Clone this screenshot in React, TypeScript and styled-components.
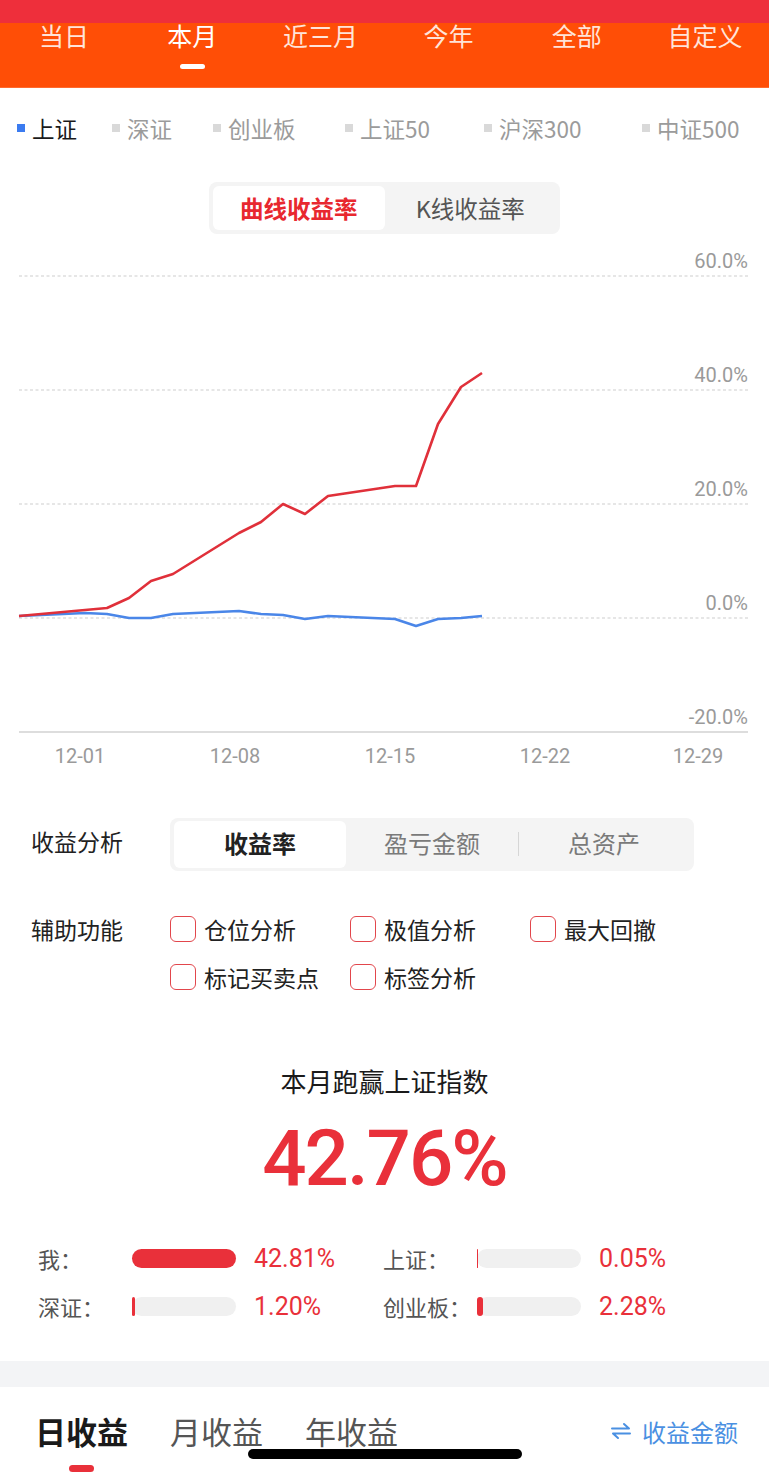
import React from 'react'
import styled, { createGlobalStyle } from 'styled-components'

const CN = `'Noto Sans CJK SC', 'Noto Sans', sans-serif`
const NUM = `Roboto, 'Noto Sans CJK SC', sans-serif`
const RED = '#E9303A'

const GlobalStyle = createGlobalStyle`
  html, body { margin: 0; padding: 0; background: #fff; }
  body { font-family: ${CN}; -webkit-font-smoothing: antialiased; }
  * { box-sizing: border-box; }
`

const periods = ['当日', '本月', '近三月', '今年', '全部', '自定义']
const indexes = [
  { name: '上证', color: '#3B7BF0', active: true },
  { name: '深证', color: '#D9D9D9' },
  { name: '创业板', color: '#D9D9D9' },
  { name: '上证50', color: '#D9D9D9' },
  { name: '沪深300', color: '#D9D9D9' },
  { name: '中证500', color: '#D9D9D9' },
]

// chart coordinates, already in svg space (page y - 240)
const myLine = [
  [19, 377], [107, 369], [129, 359], [151, 342], [173, 335], [239, 294], [261, 283],
  [283, 265], [305, 275], [328, 257], [395, 247], [416, 247], [438, 185], [461, 148], [482, 134],
]
const szLine = [
  [19, 377], [85, 374], [107, 375], [129, 379], [151, 379], [173, 375], [239, 372], [261, 375],
  [283, 376], [305, 380], [328, 377], [395, 380], [416, 387], [438, 380], [461, 379], [482, 377],
]
const gridY = [
  { y: 37, label: '60.0%' },
  { y: 151, label: '40.0%' },
  { y: 265, label: '20.0%' },
  { y: 379, label: '0.0%' },
]
const xTicks = [
  { x: 80, label: '12-01' },
  { x: 235, label: '12-08' },
  { x: 390, label: '12-15' },
  { x: 545, label: '12-22' },
  { x: 698, label: '12-29' },
]

const helpers = ['仓位分析', '极值分析', '最大回撤', '标记买卖点', '标签分析']

const compare = [
  { name: '我：', value: 42.81 },
  { name: '上证：', value: 0.05 },
  { name: '深证：', value: 1.2 },
  { name: '创业板：', value: 2.28 },
]
const maxValue = Math.max(...compare.map(c => c.value))
const BAR_W = 104

const toPoints = (pts: number[][]) => pts.map(p => p.join(',')).join(' ')

const App = () => {
  return (
    <Page>
      <GlobalStyle />
      <StatusBar />
      <Nav>
        {periods.map(p => (
          <NavTab key={p} $active={p === '本月'}>
            {p}
            <NavMark $active={p === '本月'} />
          </NavTab>
        ))}
      </Nav>

      <Legend>
        {indexes.map(i => (
          <LegendItem key={i.name} $active={!!i.active}>
            <LegendDot $color={i.color} />
            {i.name}
          </LegendItem>
        ))}
      </Legend>

      <SegWrap>
        <Seg>
          <SegItem $active>曲线收益率</SegItem>
          <SegItem>K线收益率</SegItem>
        </Seg>
      </SegWrap>

      <ChartSvg viewBox="0 0 769 545">
        {gridY.map(g => (
          <g key={g.label}>
            <line x1={19} x2={748} y1={g.y} y2={g.y} stroke="#DEDEDE" strokeWidth={1.5} strokeDasharray="3 2.5" />
            <AxisText x={748} y={g.y - 8} textAnchor="end">{g.label}</AxisText>
          </g>
        ))}
        <AxisText x={748} y={485} textAnchor="end">-20.0%</AxisText>
        <line x1={19} x2={748} y1={493} y2={493} stroke="#DDDDDD" strokeWidth={2} />
        {xTicks.map(t => (
          <AxisText key={t.label} x={t.x} y={524} textAnchor="middle" fill="#8C8C8C">{t.label}</AxisText>
        ))}
        <polyline points={toPoints(szLine)} fill="none" stroke="#4A86E8" strokeWidth={2.6} strokeLinejoin="round" />
        <polyline points={toPoints(myLine)} fill="none" stroke="#E0303A" strokeWidth={2.6} strokeLinejoin="round" />
      </ChartSvg>

      <AnalysisRow>
        <RowLabel $lift>收益分析</RowLabel>
        <Tabs>
          <TabItem $active>收益率</TabItem>
          <TabItem>盈亏金额</TabItem>
          <TabItem $divider>总资产</TabItem>
        </Tabs>
      </AnalysisRow>

      <HelperRow>
        <RowLabel>辅助功能</RowLabel>
        <CheckGrid>
          {helpers.map(h => (
            <CheckItem key={h}>
              <CheckBox />
              {h}
            </CheckItem>
          ))}
        </CheckGrid>
      </HelperRow>

      <SummaryTitle>本月跑赢上证指数</SummaryTitle>
      <BigNum>42.76%</BigNum>

      <CompareGrid>
        {compare.map(c => (
          <CompareItem key={c.name}>
            <CompareLabel>{c.name}</CompareLabel>
            <Track>
              <Fill style={{ width: `${Math.max(1, (c.value / maxValue) * BAR_W)}px` }} />
            </Track>
            <CompareValue>{c.value.toFixed(2)}%</CompareValue>
          </CompareItem>
        ))}
      </CompareGrid>

      <Band />

      <BottomTabs>
        <TabGroup>
          {['日收益', '月收益', '年收益'].map((t, i) => (
            <BottomTab key={t} $active={i === 0}>
              {t}
              <BottomMark $active={i === 0} />
            </BottomTab>
          ))}
        </TabGroup>
        <AmountSwitch>
          <svg width="22" height="18" viewBox="0 0 22 18">
            <path d="M2 6.5 H19 L14 2" fill="none" stroke="#4A90E2" strokeWidth="2" strokeLinecap="round" strokeLinejoin="round" />
            <path d="M20 11.5 H3 L8 16" fill="none" stroke="#4A90E2" strokeWidth="2" strokeLinecap="round" strokeLinejoin="round" />
          </svg>
          收益金额
        </AmountSwitch>
      </BottomTabs>

      <HomeBar />
    </Page>
  )
}

export default App

const Page = styled.div`
position: relative;
width: 769px;
height: 1475px;
overflow: hidden;
background: #fff;
`

const StatusBar = styled.div`
height: 23px;
background: #EE2F3B;
`

const Nav = styled.div`
display: grid;
grid-template-columns: repeat(6, 1fr);
height: 65px;
background: #FF4E06;
border-bottom: 1px solid #FF6A2E;
`

const NavTab = styled.div<{ $active?: boolean }>`
display: flex;
flex-direction: column;
align-items: center;
font-size: 25px;
line-height: 24px;
color: ${p => (p.$active ? '#ffffff' : '#FFE4D9')};
`

const NavMark = styled.div<{ $active?: boolean }>`
width: 25px;
height: 5px;
border-radius: 3px;
margin-top: 17px;
background: #fff;
visibility: ${p => (p.$active ? 'visible' : 'hidden')};
`

const Legend = styled.div`
display: grid;
grid-template-columns: 95px 101px 132px 139px 158px auto;
align-items: center;
height: 79px;
padding-left: 17px;
`

const LegendItem = styled.div<{ $active?: boolean }>`
display: flex;
align-items: center;
gap: 7px;
font-size: 22.5px;
line-height: 28px;
color: ${p => (p.$active ? '#1A1A1A' : '#9B9B9B')};
`

const LegendDot = styled.span<{ $color: string }>`
width: 8px;
height: 8px;
background: ${p => p.$color};
`

const SegWrap = styled.div`
display: flex;
justify-content: center;
margin-top: 15px;
`

const Seg = styled.div`
display: flex;
width: 351px;
height: 52px;
padding: 4px;
border-radius: 8px;
background: #F4F4F4;
`

const SegItem = styled.div<{ $active?: boolean }>`
flex: 1;
display: flex;
align-items: center;
justify-content: center;
border-radius: 6px;
font-size: 23.5px;
font-weight: ${p => (p.$active ? 700 : 400)};
color: ${p => (p.$active ? '#E8282F' : '#555555')};
background: ${p => (p.$active ? '#ffffff' : 'transparent')};
`

const ChartSvg = styled.svg`
display: block;
width: 769px;
height: 545px;
margin-top: 5px;
`

const AxisText = styled.text`
font-family: ${NUM};
font-size: 20px;
fill: #9A9A9A;
`

const AnalysisRow = styled.div`
display: flex;
align-items: center;
margin-top: 34px;
padding-left: 31px;
`

const RowLabel = styled.div<{ $lift?: boolean }>`
width: 139px;
flex-shrink: 0;
padding-bottom: ${p => (p.$lift ? '7px' : '0')};
font-size: 23px;
line-height: 26px;
color: #222;
`

const Tabs = styled.div`
display: grid;
grid-template-columns: repeat(3, 1fr);
width: 524px;
height: 53px;
padding: 3px 4px;
border-radius: 8px;
background: #F4F4F4;
`

const TabItem = styled.div<{ $active?: boolean; $divider?: boolean }>`
position: relative;
display: flex;
align-items: center;
justify-content: center;
padding-bottom: 5px;
border-radius: 6px;
font-size: 24px;
font-weight: ${p => (p.$active ? 700 : 400)};
color: ${p => (p.$active ? '#222' : '#7A7A7A')};
background: ${p => (p.$active ? '#fff' : 'transparent')};
&::before {
  content: '';
  display: ${p => (p.$divider ? 'block' : 'none')};
  position: absolute;
  left: 0;
  top: 11px;
  width: 1px;
  height: 24px;
  background: #D6D6D6;
}
`

const HelperRow = styled.div`
display: flex;
align-items: flex-start;
margin-top: 45px;
padding-left: 31px;
`

const CheckGrid = styled.div`
display: grid;
grid-template-columns: repeat(3, 180px);
row-gap: 22px;
`

const CheckItem = styled.div`
display: flex;
align-items: center;
gap: 8px;
font-size: 23px;
line-height: 26px;
color: #222;
`

const CheckBox = styled.span`
width: 26px;
height: 26px;
border: 1.5px solid #E2464C;
border-radius: 6px;
`

const SummaryTitle = styled.div`
margin-top: 73px;
text-align: center;
font-size: 26px;
line-height: 36px;
color: #1A1A1A;
`

const BigNum = styled.div`
margin-top: 21px;
text-align: center;
font-family: ${NUM};
font-size: 78px;
font-weight: 500;
line-height: 78px;
letter-spacing: -2px;
color: ${RED};
`

const CompareGrid = styled.div`
display: grid;
grid-template-columns: 345px 345px;
row-gap: 18px;
margin-top: 44px;
padding-left: 38px;
`

const CompareItem = styled.div`
display: grid;
grid-template-columns: 94px ${BAR_W}px auto;
align-items: center;
height: 30px;
`

const CompareLabel = styled.div`
font-size: 22px;
color: #555;
`

const Track = styled.div`
height: 19px;
border-radius: 10px;
background: #F0F0F0;
`

const Fill = styled.div`
height: 100%;
border-radius: 10px;
background: ${RED};
`

const CompareValue = styled.div`
margin-left: 18px;
font-family: ${NUM};
font-size: 25px;
color: ${RED};
`

const Band = styled.div`
margin-top: 41px;
height: 26px;
background: #F3F4F6;
`

const BottomTabs = styled.div`
display: flex;
justify-content: space-between;
align-items: flex-start;
margin-top: 22px;
padding: 0 31px 0 35px;
`

const TabGroup = styled.div`
display: flex;
gap: 42px;
`

const BottomTab = styled.div<{ $active?: boolean }>`
display: flex;
flex-direction: column;
align-items: center;
font-size: 31px;
line-height: 44px;
font-weight: ${p => (p.$active ? 700 : 400)};
color: ${p => (p.$active ? '#1A1A1A' : '#555')};
`

const BottomMark = styled.div<{ $active?: boolean }>`
width: 25px;
height: 7px;
margin-top: 12px;
border-radius: 4px;
background: ${RED};
visibility: ${p => (p.$active ? 'visible' : 'hidden')};
`

const AmountSwitch = styled.div`
display: flex;
align-items: center;
gap: 10px;
height: 44px;
font-size: 24px;
color: #4A90E2;
`

const HomeBar = styled.div`
position: absolute;
left: 50%;
bottom: 16px;
width: 274px;
height: 10px;
border-radius: 5px;
background: #000;
transform: translateX(-50%);
`
